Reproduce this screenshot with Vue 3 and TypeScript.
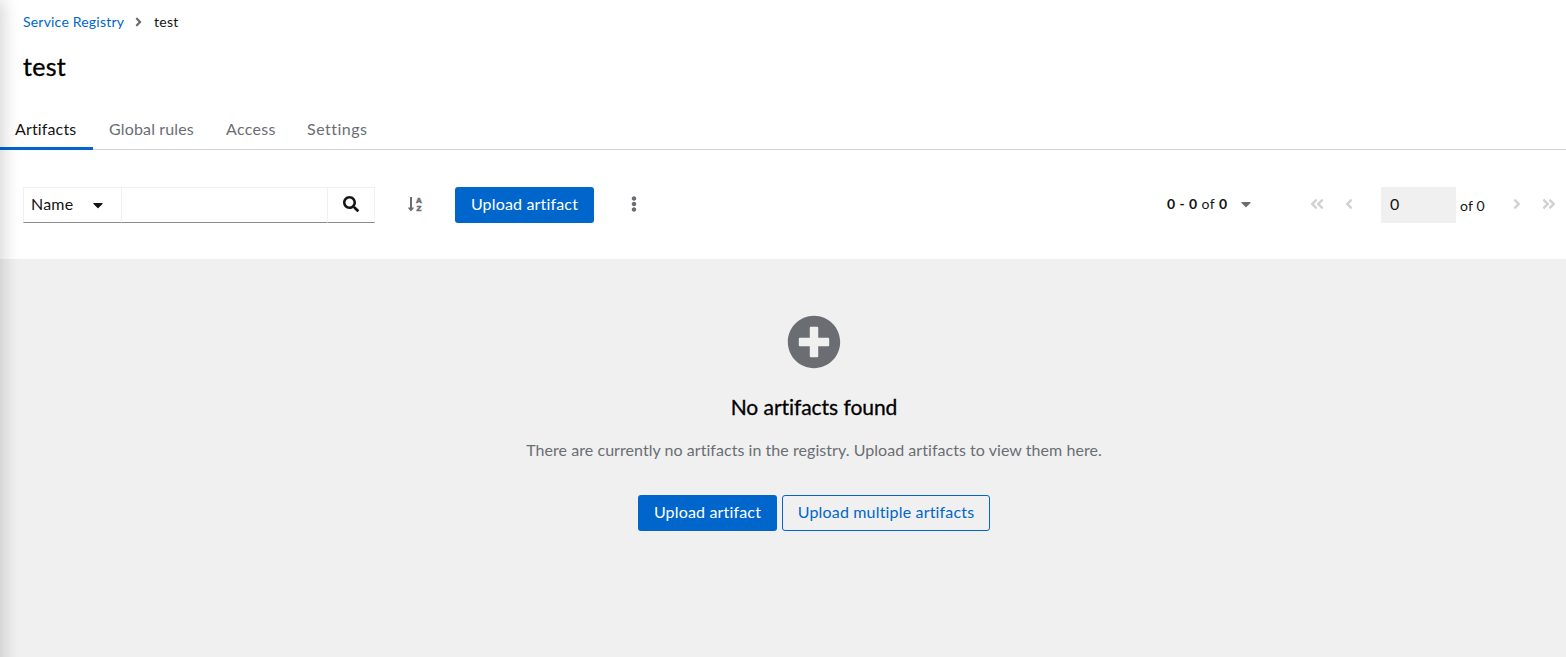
<script setup lang="ts">
import { ref } from 'vue'

const tabs = ['Artifacts', 'Global rules', 'Access', 'Settings']
const activeTab = ref('Artifacts')
const filter = ref('')
const page = ref('0')

const icons = {
  angleRight:
    'M224.3 273l-136 136c-9.4 9.4-24.6 9.4-33.9 0l-22.6-22.6c-9.4-9.4-9.4-24.6 0-33.9l96.4-96.4-96.4-96.4c-9.4-9.4-9.4-24.6 0-33.9L54.3 103c9.4-9.4 24.6-9.4 33.9 0l136 136c9.5 9.4 9.5 24.6.1 34z',
  angleLeft:
    'M31.7 239l136-136c9.4-9.4 24.6-9.4 33.9 0l22.6 22.6c9.4 9.4 9.4 24.6 0 33.9L127.9 256l96.4 96.4c9.4 9.4 9.4 24.6 0 33.9L201.7 409c-9.4 9.4-24.6 9.4-33.9 0l-136-136c-9.5-9.4-9.5-24.6-.1-34z',
  doubleRight:
    'M224.3 273l-136 136c-9.4 9.4-24.6 9.4-33.9 0l-22.6-22.6c-9.4-9.4-9.4-24.6 0-33.9l96.4-96.4-96.4-96.4c-9.4-9.4-9.4-24.6 0-33.9L54.3 103c9.4-9.4 24.6-9.4 33.9 0l136 136c9.5 9.4 9.5 24.6.1 34zm192-34l-136-136c-9.4-9.4-24.6-9.4-33.9 0l-22.6 22.6c-9.4 9.4-9.4 24.6 0 33.9l96.4 96.4-96.4 96.4c-9.4 9.4-9.4 24.6 0 33.9l22.6 22.6c9.4 9.4 24.6 9.4 33.9 0l136-136c9.4-9.2 9.4-24.4 0-33.8z',
  doubleLeft:
    'M223.7 239l136-136c9.4-9.4 24.6-9.4 33.9 0l22.6 22.6c9.4 9.4 9.4 24.6 0 33.9L319.9 256l96.4 96.4c9.4 9.4 9.4 24.6 0 33.9L393.7 409c-9.4 9.4-24.6 9.4-33.9 0l-136-136c-9.5-9.4-9.5-24.6-.1-34zm-192 34l136 136c9.4 9.4 24.6 9.4 33.9 0l22.6-22.6c9.4-9.4 9.4-24.6 0-33.9L127.9 256l96.4-96.4c9.4-9.4 9.4-24.6 0-33.9L201.7 103c-9.4-9.4-24.6-9.4-33.9 0l-136 136c-9.5 9.4-9.5 24.6-.1 34z',
  caret:
    'M31.3 192h257.3c17.8 0 26.7 21.5 14.1 34.1L174.1 354.8c-7.8 7.8-20.5 7.8-28.3 0L17.2 226.1C4.6 213.5 13.5 192 31.3 192z',
  search:
    'M505 442.7L405.3 343c-4.5-4.5-10.6-7-17-7H372c27.6-35.3 44-79.7 44-128C416 93.1 322.9 0 208 0S0 93.1 0 208s93.1 208 208 208c48.3 0 92.7-16.4 128-44v16.3c0 6.4 2.5 12.5 7 17l99.7 99.7c9.4 9.4 24.6 9.4 33.9 0l28.3-28.3c9.4-9.4 9.4-24.6.1-34zM208 336c-70.7 0-128-57.2-128-128 0-70.7 57.2-128 128-128 70.7 0 128 57.2 128 128 0 70.7-57.2 128-128 128z',
  kebab:
    'M96 184c39.8 0 72 32.2 72 72s-32.2 72-72 72-72-32.2-72-72 32.2-72 72-72zM24 80c0 39.8 32.2 72 72 72s72-32.2 72-72S135.8 8 96 8 24 40.2 24 80zm0 352c0 39.8 32.2 72 72 72s72-32.2 72-72-32.2-72-72-72-72 32.2-72 72z',
  plusCircle:
    'M256 8C119 8 8 119 8 256s111 248 248 248 248-111 248-248S393 8 256 8zm144 276c0 6.6-5.4 12-12 12h-92v92c0 6.6-5.4 12-12 12h-56c-6.6 0-12-5.4-12-12v-92h-92c-6.6 0-12-5.4-12-12v-56c0-6.6 5.4-12 12-12h92v-92c0-6.6 5.4-12 12-12h56c6.6 0 12 5.4 12 12v92h92c6.6 0 12 5.4 12 12v56z',
}
</script>

<template>
  <div class="page">
    <div class="nav-shadow"></div>
    <header class="header">
      <nav class="breadcrumb">
        <a class="crumb-link">Service Registry</a>
        <svg class="crumb-sep" width="7" height="14" viewBox="0 0 256 512"><path :d="icons.angleRight" /></svg>
        <span class="crumb-current">test</span>
      </nav>
      <h1 class="title">test</h1>
    </header>

    <div class="tabs">
      <button
        v-for="tab in tabs"
        :key="tab"
        :class="['tab', 'tab-' + tab.split(' ')[0].toLowerCase(), { active: tab === activeTab }]"
        @click="activeTab = tab"
      >{{ tab }}</button>
    </div>

    <div class="toolbar">
      <div class="filter">
        <button class="filter-type">
          <span class="filter-label">Name</span>
          <svg width="10" height="16" viewBox="0 0 320 512"><path :d="icons.caret" /></svg>
        </button>
        <input v-model="filter" class="filter-input" />
        <button class="filter-search">
          <svg width="16" height="16" viewBox="0 0 512 512"><path :d="icons.search" /></svg>
        </button>
      </div>
      <button class="sort">
        <svg width="16" height="16" viewBox="0 0 16 16">
          <path d="M3 1h2v10.500h1.300c.5 0 .7.5.4.8L4.400 15c-.2.2-.6.2-.8 0L1.200 12.300c-.3-.3-.1-.8.4-.8H3z" />
          <text x="12" y="6.900" text-anchor="middle">A</text>
          <text x="12" y="15" text-anchor="middle">Z</text>
        </svg>
      </button>
      <button class="btn primary toolbar-upload">Upload artifact</button>
      <button class="kebab">
        <svg width="6" height="16" viewBox="0 0 192 512"><path :d="icons.kebab" /></svg>
      </button>
      <div class="pagination">
        <span class="range"><b>0 - 0</b> of <b>0</b></span>
        <svg class="range-caret" width="10" height="16" viewBox="0 0 320 512"><path :d="icons.caret" /></svg>
        <svg class="first" width="14" height="16" viewBox="0 0 448 512"><path :d="icons.doubleLeft" /></svg>
        <svg class="prev" width="8" height="16" viewBox="0 0 256 512"><path :d="icons.angleLeft" /></svg>
        <input v-model="page" class="page-input" disabled />
        <span class="total">of 0</span>
        <svg class="next" width="8" height="16" viewBox="0 0 256 512"><path :d="icons.angleRight" /></svg>
        <svg class="last" width="14" height="16" viewBox="0 0 448 512"><path :d="icons.doubleRight" /></svg>
      </div>
    </div>

    <main class="empty">
      <svg class="empty-icon" width="54" height="54" viewBox="0 0 512 512"><path :d="icons.plusCircle" /></svg>
      <h2 class="empty-title">No artifacts found</h2>
      <p class="empty-text">There are currently no artifacts in the registry. Upload artifacts to view them here.</p>
      <div class="actions">
        <button class="btn primary">Upload artifact</button>
        <button class="btn secondary">Upload multiple artifacts</button>
      </div>
    </main>
  </div>
</template>

<style>
body {
  background: #fff;
  overflow: hidden;
}
</style>

<style scoped>
.page {
  position: relative;
  display: flex;
  flex-direction: column;
  width: 100%;
  height: 657px;
  overflow: hidden;
  color: #151515;
  font-family: Lato, 'Liberation Sans', sans-serif;
  font-size: 16px;
  line-height: 24px;
}
.page * { box-sizing: border-box; }
svg { display: block; flex: none; fill: currentColor; }
button, input {
  margin: 0;
  padding: 0;
  border: 0;
  border-radius: 0;
  background: transparent;
  color: inherit;
  font: inherit;
  white-space: nowrap;
  outline: 0;
}
.nav-shadow {
  position: absolute;
  z-index: 2;
  top: 0;
  left: -20px;
  width: 20px;
  height: 700px;
  box-shadow: 3px 0 17px rgba(3, 3, 3, 0.18);
  pointer-events: none;
}
.header { height: 110px; padding: 11px 23px 0; }
.breadcrumb { display: flex; align-items: center; height: 21px; font-size: 14px; line-height: 21px; }
.crumb-link { width: 101px; color: #06c; letter-spacing: 0.2px; white-space: nowrap; }
.crumb-sep { margin: 0 12px 0 11px; color: #6a6e73; }
.crumb-current { letter-spacing: 0.3px; }
.title { margin: 19px 0 0; color: #000; font-size: 25px; font-weight: 400; line-height: 31px; letter-spacing: 0.3px; -webkit-text-stroke: 0.35px #000; }

.tabs { display: flex; height: 40px; border-bottom: 1px solid #d2d2d2; }
.tab { height: 40px; padding: 0 0 3px 16px; color: #6a6e73; text-align: left; letter-spacing: 0.15px; }
.tab-artifacts { width: 93px; padding-left: 15px; }
.tab-global { width: 117px; }
.tab-access { width: 81px; letter-spacing: 0.3px; }
.tab-settings { width: 92px; letter-spacing: 0.5px; }
.tab.active { color: #151515; border-bottom: 3px solid #06c; padding-bottom: 0; }

.toolbar { display: flex; align-items: flex-start; height: 109px; padding: 37px 10px 0 23px; }
.filter { display: flex; width: 352px; height: 36px; }
.filter > * { height: 36px; border: 1px solid #f0f0f0; border-bottom-color: #8a8d90; }
.filter-type { display: flex; align-items: center; justify-content: space-between; width: 99px; padding: 0 18px 1px 7px; letter-spacing: 0.2px; }
.filter-label { margin-bottom: 2px; }
.filter-input { width: 206px; border-left: 0 !important; border-right: 0 !important; }
.filter-search { display: flex; align-items: center; justify-content: center; width: 48px; padding-bottom: 2px; }
.sort { display: flex; align-items: center; height: 34px; margin-left: 32px; color: #6a6e73; }
.sort text { font: bold 8px 'Liberation Sans', sans-serif; stroke: currentColor; stroke-width: 0.6px; }
.btn { display: flex; align-items: center; justify-content: center; height: 36px; padding-bottom: 2px; border-radius: 3px; letter-spacing: 0.17px; }
.primary { width: 139px; background: #06c; color: #fff; }
.secondary { width: 208px; border: 1px solid #06c; color: #06c; }
.toolbar-upload { margin-left: 32px; }
.kebab { display: flex; align-items: center; height: 34px; margin-left: 37px; color: #6a6e73; }
.pagination { display: flex; align-items: center; height: 36px; margin-left: auto; color: #d2d2d2; font-size: 14px; }
.pagination svg { margin-bottom: 2px; }
.range { width: 61px; margin-bottom: 2px; color: #151515; letter-spacing: 0.45px; white-space: nowrap; }
.range b { font-weight: 700; }
.range-caret { margin-left: 13px; color: #6a6e73; }
.first { margin-left: 59px; }
.prev { margin-left: 21px; }
.page-input { width: 75px; height: 36px; margin-left: 28px; padding: 0 0 3px 9px; background: #f0f0f0; color: #151515; font-size: 16px; }
.total { width: 26px; margin: 2px 0 0 4px; color: #151515; letter-spacing: 0.2px; white-space: nowrap; }
.next { margin-left: 27px; }
.last { margin-left: 21px; }

.empty { display: flex; flex: 1; flex-direction: column; align-items: center; padding: 56px 0 0 62px; background: #f0f0f0; }
.empty-icon { color: #6a6e73; }
.empty-title { margin: 23px 0 0; color: #000; font-size: 21px; font-weight: 400; line-height: 30px; letter-spacing: -0.05px; -webkit-text-stroke: 0.3px #000; white-space: nowrap; }
.empty-text { margin: 16px 0 0; color: #6a6e73; letter-spacing: 0.05px; white-space: nowrap; }
.actions { display: flex; gap: 5px; margin-top: 33px; }
</style>
